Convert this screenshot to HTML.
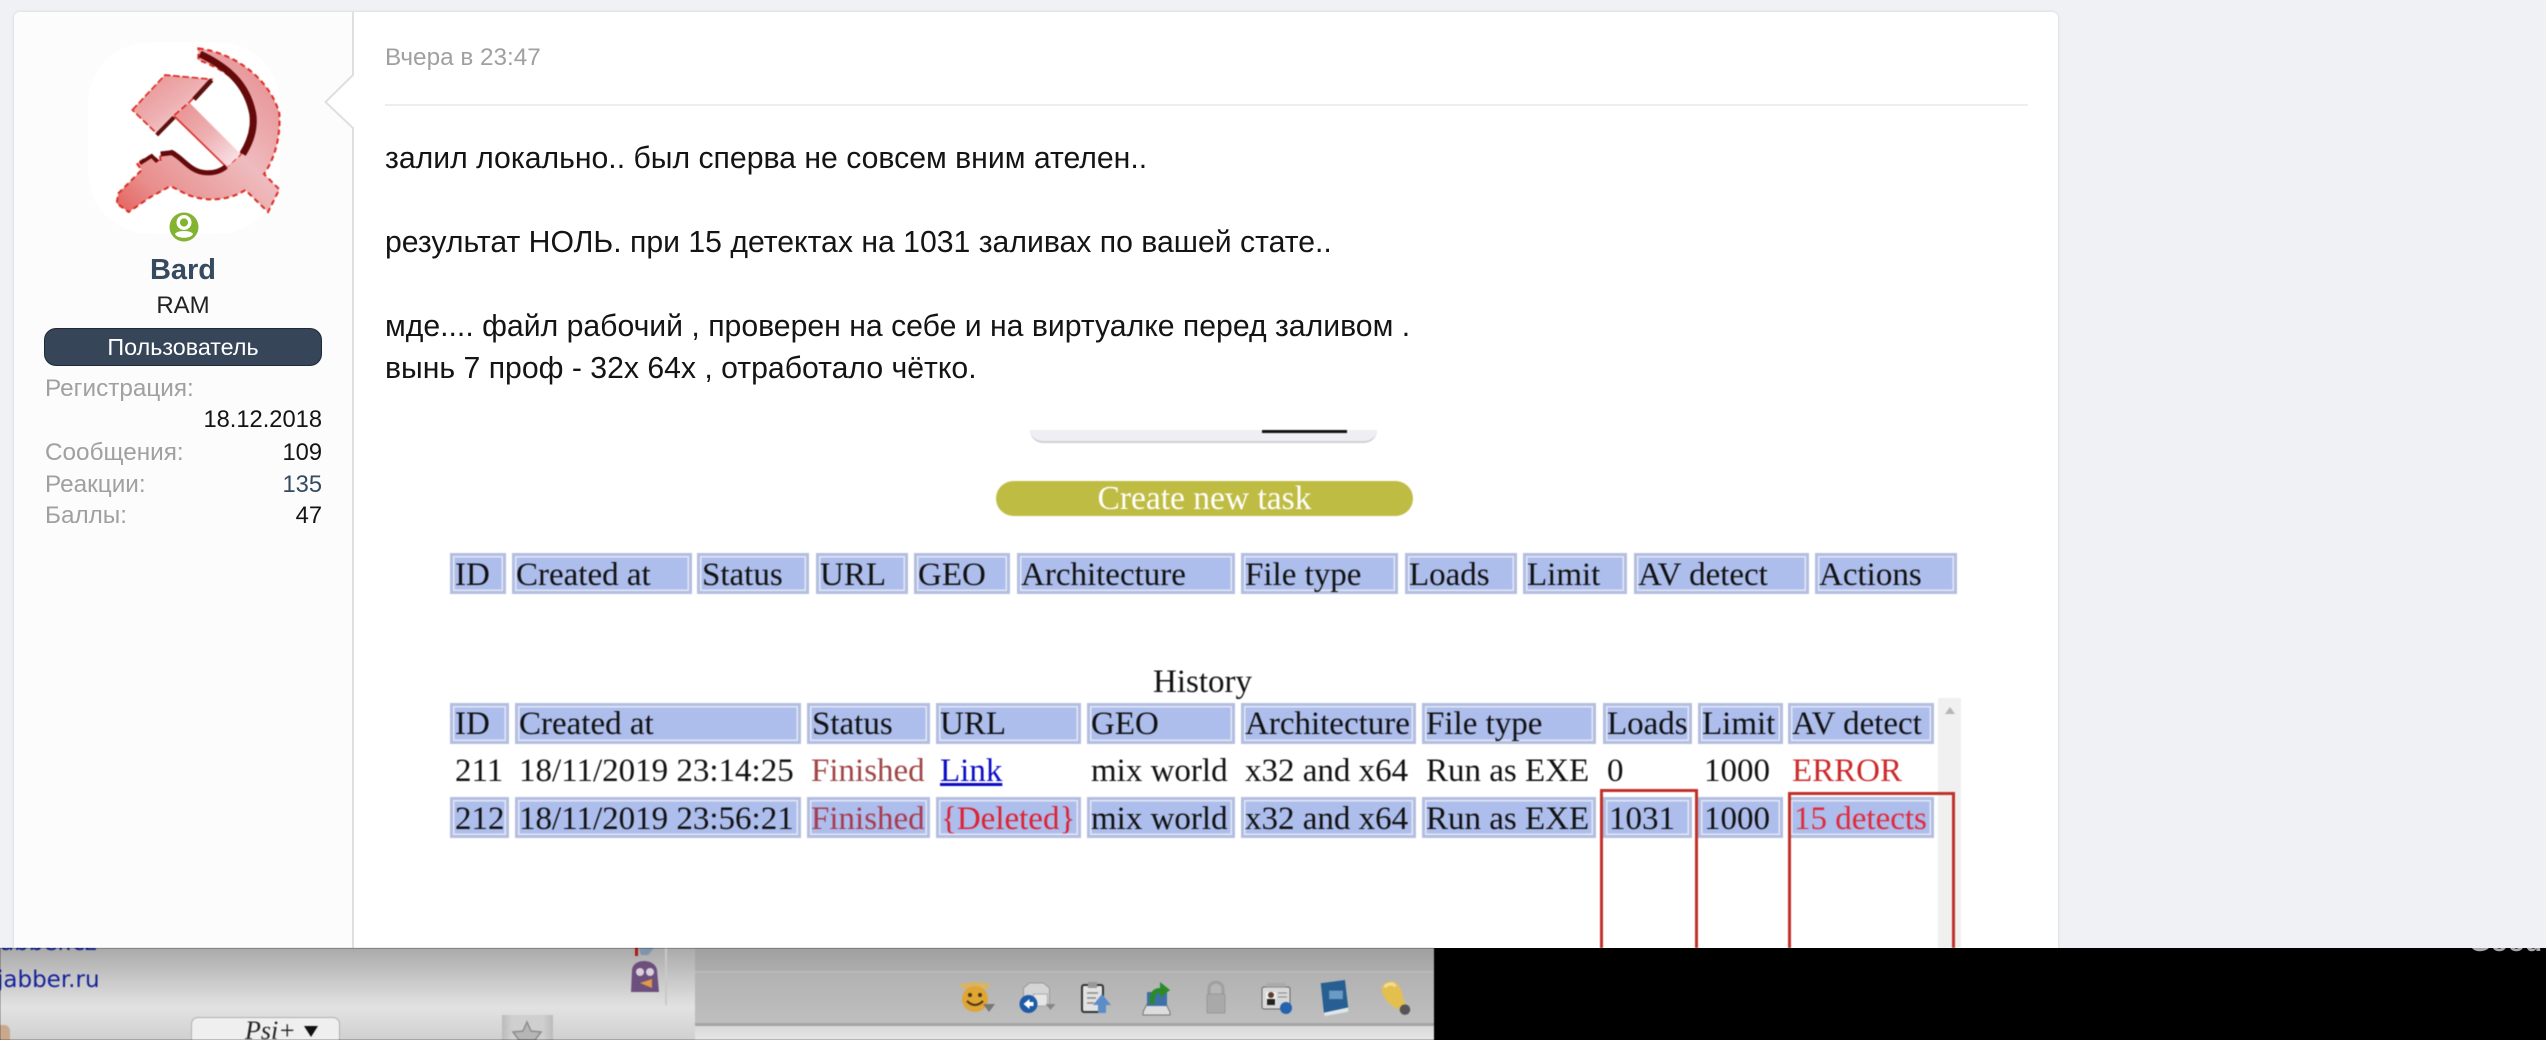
<!DOCTYPE html>
<html lang="ru"><head><meta charset="utf-8"><title>Post</title>
<style>
html,body{margin:0;padding:0}
body{width:2546px;height:1040px;overflow:hidden;position:relative;background:#f0f1f5;font-family:"Liberation Sans",sans-serif;color:#141414}
.a{position:absolute;white-space:nowrap}
#card{position:absolute;left:14px;top:12px;width:2044px;height:960px;background:#fff;border-radius:6px 6px 0 0;box-shadow:0 0 3px rgba(0,0,0,.13)}
#side{position:absolute;left:14px;top:12px;width:338px;height:960px;background:#fcfcfc;border-right:2px solid #dfdfdf;border-radius:6px 0 0 0}
.s{font-size:24.300px;line-height:32px}
.g{color:#a0a0a0}
.r{text-align:right;right:2224px;font-size:23.700px}
.b{font-size:30.200px;line-height:42px;color:#141414}
#shot{position:absolute;left:0;top:0;width:2546px;height:948px;overflow:hidden;filter:blur(.5px);font-family:"Liberation Serif",serif;font-size:33px;line-height:40px;color:#111}
.c{position:absolute;height:41px;box-sizing:border-box;border:3px solid #b3bee0;background:#adbdec;box-shadow:inset 0 0 0 1.5px #e4e9f8}
.t{position:absolute;white-space:nowrap}
</style></head><body>
<div id="card"></div>
<div id="side"></div>
<svg class="a" style="left:320px;top:70px" width="36" height="64" viewBox="0 0 36 64"><path d="M34 4 L5.500 32 L34 59" fill="#fff" stroke="#dfdfdf" stroke-width="2"/><rect x="34" y="0" width="2" height="64" fill="#fff"/></svg>
<div class="a" style="left:88px;top:42px;width:192px;height:192px;background:#fff;border-radius:62px"></div>

<svg class="a" style="left:70px;top:30px;filter:blur(.4px)" width="230" height="210" viewBox="0 0 690 630">
<defs>
<linearGradient id="sk" x1="0" y1="1" x2="1" y2="0"><stop offset="0" stop-color="#e4615c"/><stop offset=".18" stop-color="#e88e8c"/><stop offset=".55" stop-color="#efbbbe"/><stop offset="1" stop-color="#e58688"/></linearGradient>
<linearGradient id="hm" x1="0" y1="0" x2="1" y2="1"><stop offset="0" stop-color="#e98e8e"/><stop offset=".5" stop-color="#eeb0b2"/><stop offset="1" stop-color="#faeaf0"/></linearGradient>
</defs>
<path d="M385 55 C500 70 600 150 628 250 C632 320 615 385 582 432 L628 478 L594 546 L526 480 C480 510 420 515 370 500 C335 490 305 465 298 470 L240 502 L176 546 L140 520 L145 490 L215 420 L200 400 L245 375 L272 398 L270 375 L305 362 C335 375 360 420 400 432 C430 435 455 425 470 410 L510 375 C540 320 555 270 530 200 C500 140 440 110 385 90 Z" fill="url(#sk)" stroke="#dd2a22" stroke-width="6" stroke-dasharray="16 11"/>
<path d="M358 218 L512 372 L470 412 L312 258 Z" fill="url(#hm)"/>
<path d="M187 240 L285 135 L425 148 L360 215 L310 258 L265 315 Z" fill="url(#hm)" stroke="#dd2a22" stroke-width="5" stroke-dasharray="20 8"/>
<path d="M312 258 L470 412" stroke="#d8302c" stroke-width="5" fill="none"/>
<path d="M390 72 C470 110 530 160 548 250 C556 300 535 345 518 372" fill="none" stroke="#640a0a" stroke-width="21"/>
<path d="M272 372 L305 368 C340 385 360 425 405 428 C430 430 450 425 468 410" fill="none" stroke="#640a0a" stroke-width="15"/>
<path d="M425 150 L372 208" fill="none" stroke="#5e0f0f" stroke-width="14"/>
<path d="M260 315 L312 262" fill="none" stroke="#5e0f0f" stroke-width="12"/>
<path d="M210 400 L245 378 L262 395" fill="none" stroke="#640a0a" stroke-width="11"/>
</svg>

<svg class="a" style="left:169px;top:212px" width="30" height="30" viewBox="0 0 30 30"><circle cx="15" cy="15" r="14.500" fill="#84b332"/><circle cx="15" cy="10.500" r="5.800" fill="none" stroke="#fff" stroke-width="3.400"/><path d="M6 22 C8 18 22 18 24 22 C22 27 8 27 6 22 Z" fill="#fff"/></svg>

<div class="a" style="left:14px;width:338px;text-align:center;top:253px;font-size:29px;font-weight:700;line-height:34px;color:#364a60">Bard</div>
<div class="a" style="left:14px;width:338px;text-align:center;top:291px;font-size:24px;line-height:30px;color:#222">RAM</div>
<div class="a" style="left:44px;top:328px;width:278px;height:38px;box-sizing:border-box;background:#364558;border:1px solid #1f2a36;border-radius:12px;color:#fff;font-size:23.300px;line-height:36px;text-align:center">Пользователь</div>
<div class="a s g" style="left:45px;top:373px">Регистрация:</div>
<div class="a s r" style="top:404px">18.12.2018</div>
<div class="a s g" style="left:45px;top:437px">Сообщения:</div>
<div class="a s r" style="top:437px">109</div>
<div class="a s g" style="left:45px;top:469px">Реакции:</div>
<div class="a s r" style="top:469px;color:#364a60">135</div>
<div class="a s g" style="left:45px;top:500px">Баллы:</div>
<div class="a s r" style="top:500px">47</div>

<div class="a" style="left:385px;top:44px;font-size:24.300px;line-height:28px;color:#a0a0a0">Вчера в 23:47</div>
<div class="a" style="left:385px;top:104px;width:1643px;height:2px;background:#eeeeee"></div>
<div class="a b" style="left:385px;top:138px">залил локально.. был сперва не совсем вним ателен..</div>
<div class="a b" style="left:385px;top:222px">результат НОЛЬ. при 15 детектах на 1031 заливах по вашей стате..</div>
<div class="a b" style="left:385px;top:306px">мде.... файл рабочий , проверен на себе и на виртуалке перед заливом .</div>
<div class="a b" style="left:385px;top:348px">вынь 7 проф - 32x 64x , отработало чётко.</div>

<div id="shot">
<div class="a" style="left:1030px;top:430px;width:347px;height:13px;background:#eeeef3;border-radius:0 0 20px 20px;border-bottom:2px solid #cfcfd6;box-sizing:border-box"></div>
<div class="a" style="left:1262px;top:430px;width:85px;height:3px;background:#111"></div>
<div class="a" style="left:996px;top:481px;width:417px;height:35px;border-radius:18px;background:#bfbc44;color:#fff;text-align:center;font-size:33.500px;line-height:36px">Create new task</div>

<div class="c" style="left:450px;top:553px;width:56px"></div><div class="c" style="left:512px;top:553px;width:180px"></div><div class="c" style="left:697px;top:553px;width:112px"></div><div class="c" style="left:816px;top:553px;width:92px"></div><div class="c" style="left:914px;top:553px;width:96px"></div><div class="c" style="left:1017px;top:553px;width:218px"></div><div class="c" style="left:1241px;top:553px;width:157px"></div><div class="c" style="left:1405px;top:553px;width:112px"></div><div class="c" style="left:1523px;top:553px;width:104px"></div><div class="c" style="left:1634px;top:553px;width:175px"></div><div class="c" style="left:1815px;top:553px;width:142px"></div>
<div class="t" style="left:455px;top:555px">ID</div><div class="t" style="left:516px;top:555px">Created at</div><div class="t" style="left:702px;top:555px">Status</div><div class="t" style="left:820px;top:555px">URL</div><div class="t" style="left:918px;top:555px">GEO</div><div class="t" style="left:1021px;top:555px">Architecture</div><div class="t" style="left:1245px;top:555px">File type</div><div class="t" style="left:1409px;top:555px">Loads</div><div class="t" style="left:1527px;top:555px">Limit</div><div class="t" style="left:1638px;top:555px">AV detect</div><div class="t" style="left:1819px;top:555px">Actions</div>

<div class="t" style="left:1153px;top:662px">History</div>

<div class="c" style="left:450px;top:703px;width:59px"></div><div class="c" style="left:515px;top:703px;width:286px"></div><div class="c" style="left:807px;top:703px;width:123px"></div><div class="c" style="left:936px;top:703px;width:145px"></div><div class="c" style="left:1087px;top:703px;width:148px"></div><div class="c" style="left:1241px;top:703px;width:175px"></div><div class="c" style="left:1422px;top:703px;width:174px"></div><div class="c" style="left:1603px;top:703px;width:89px"></div><div class="c" style="left:1698px;top:703px;width:85px"></div><div class="c" style="left:1788px;top:703px;width:146px"></div>
<div class="t" style="left:455px;top:704px">ID</div><div class="t" style="left:519px;top:704px">Created at</div><div class="t" style="left:812px;top:704px">Status</div><div class="t" style="left:940px;top:704px">URL</div><div class="t" style="left:1091px;top:704px">GEO</div><div class="t" style="left:1245px;top:704px">Architecture</div><div class="t" style="left:1426px;top:704px">File type</div><div class="t" style="left:1607px;top:704px">Loads</div><div class="t" style="left:1702px;top:704px">Limit</div><div class="t" style="left:1792px;top:704px">AV detect</div>

<div class="t" style="left:455px;top:751px">211</div><div class="t" style="left:519px;top:751px">18/11/2019 23:14:25</div><div class="t" style="left:811px;top:751px;color:#a04545">Finished</div><div class="t" style="left:940px;top:751px;color:#0a0ac8;text-decoration:underline">Link</div><div class="t" style="left:1091px;top:751px">mix world</div><div class="t" style="left:1245px;top:751px">x32 and x64</div><div class="t" style="left:1426px;top:751px">Run as EXE</div><div class="t" style="left:1607px;top:751px">0</div><div class="t" style="left:1704px;top:751px">1000</div><div class="t" style="left:1792px;top:751px;color:#cc2a2a">ERROR</div>

<div class="c" style="left:450px;top:797px;width:59px"></div><div class="c" style="left:515px;top:797px;width:286px"></div><div class="c" style="left:807px;top:797px;width:123px"></div><div class="c" style="left:936px;top:797px;width:145px"></div><div class="c" style="left:1087px;top:797px;width:148px"></div><div class="c" style="left:1241px;top:797px;width:175px"></div><div class="c" style="left:1422px;top:797px;width:174px"></div><div class="c" style="left:1603px;top:797px;width:89px"></div><div class="c" style="left:1698px;top:797px;width:85px"></div><div class="c" style="left:1788px;top:797px;width:146px"></div>
<div class="t" style="left:455px;top:799px">212</div><div class="t" style="left:519px;top:799px">18/11/2019 23:56:21</div><div class="t" style="left:811px;top:799px;color:#a83a50">Finished</div><div class="t" style="left:941px;top:799px;color:#dd2233">{Deleted}</div><div class="t" style="left:1091px;top:799px">mix world</div><div class="t" style="left:1245px;top:799px">x32 and x64</div><div class="t" style="left:1426px;top:799px">Run as EXE</div><div class="t" style="left:1609px;top:799px">1031</div><div class="t" style="left:1704px;top:799px">1000</div><div class="t" style="left:1794px;top:799px;color:#e02a3a">15 detects</div>

<div class="a" style="left:1938px;top:698px;width:23px;height:250px;background:#f0f0f0"></div>
<div class="a" style="left:1945px;top:707px;width:0;height:0;border:5px solid transparent;border-top:0;border-bottom:7px solid #b5b5b5"></div>
<div class="a" style="left:1600px;top:789px;width:98px;height:170px;box-sizing:border-box;border:3px solid #c0302a"></div>
<div class="a" style="left:1788px;top:792px;width:167px;height:170px;box-sizing:border-box;border:3px solid #c0302a"></div>
</div>

<!-- bottom desktop strip -->
<div class="a" style="left:0;top:948px;width:2546px;height:92px;background:#000"></div>
<div class="a" style="left:2469px;top:948px;width:77px;height:5px;overflow:hidden"><div class="a" style="left:0;top:-23px;font-size:28px;line-height:34px;font-weight:700;color:#a8a8a8">Good !</div></div>

<div class="a" style="left:0;top:948px;width:1434px;height:92px;overflow:hidden;filter:blur(.4px)">
 <div class="a" style="left:695px;top:0;width:739px;height:75px;background:linear-gradient(#a0a0a0,#adadad 23px,#c0c0c0 23px,#b2b2b2 25px,#bfbfbf 75px)"></div>
 <div class="a" style="left:695px;top:75px;width:739px;height:3px;background:#a4a4a4"></div>
 <div class="a" style="left:695px;top:78px;width:739px;height:14px;background:linear-gradient(#dadada,#e6e6e6)"></div>
 <div class="a" style="left:0;top:0;width:695px;height:59px;background:linear-gradient(#aaaaaa,#e2e2e2)"></div>
 <div class="a" style="left:0;top:59px;width:695px;height:33px;background:linear-gradient(#e2e2e2,#d0d0d0)"></div>
 <div class="a" style="left:665px;top:0;width:2px;height:57px;background:#c8c8c8"></div>
 <div class="a" style="left:0;top:-19px;font-family:'DejaVu Sans',sans-serif;font-size:23px;line-height:28px;color:#14229a">abber.cz</div>
 <div class="a" style="left:-3px;top:16px;font-family:'DejaVu Sans',sans-serif;font-size:23px;line-height:32px;color:#14229a">jabber.ru</div>
 <svg class="a" style="left:628px;top:0" width="34" height="48" viewBox="0 0 34 48"><path d="M7 0 H10 V8 H7Z" fill="#b01818"/><path d="M11 0 H26 L20 7 H13Z" fill="#7e94aa"/><path d="M3 44 L4 22 C5 10 27 10 29 22 L31 44Z" fill="#6d4f7d"/><circle cx="12" cy="24" r="4" fill="#d9d0dc"/><circle cx="22" cy="24" r="4" fill="#d9d0dc"/><path d="M12 35 L24 31 V40Z" fill="#dc9a4a"/></svg>
 <div class="a" style="left:191px;top:69px;width:149px;height:30px;background:#efefef;border:1px solid #b0b0b0;border-radius:7px;box-sizing:border-box"></div>
 <div class="a" style="left:245px;top:68px;font-family:'Liberation Serif',serif;font-style:italic;font-size:26px;line-height:30px;color:#222">Psi+</div>
 <div class="a" style="left:304px;top:78px;width:0;height:0;border:7px solid transparent;border-top:11px solid #111;border-bottom:0"></div>
 <div class="a" style="left:502px;top:67px;width:51px;height:25px;background:linear-gradient(90deg,#bbb,#cfcfcf 20%,#cfcfcf 80%,#bbb)"></div>
 <svg class="a" style="left:511px;top:72px" width="32" height="20" viewBox="0 0 32 20"><path d="M16 2 L20 11 L30 12 L24 20 H8 L2 12 L12 11Z" fill="#b6b6b6" stroke="#8d8d8d" stroke-width="1.500"/></svg>
 <div class="a" style="left:0;top:77px;width:10px;height:15px;background:#c9a98e;border-radius:0 6px 0 0"></div>

 <!-- toolbar icons -->
 <svg class="a" style="left:958px;top:32px" width="40" height="36" viewBox="0 0 38 36"><ellipse cx="16" cy="6" rx="15" ry="4" fill="#d8b566"/><circle cx="16" cy="19" r="13" fill="#dfa535"/><circle cx="11" cy="15" r="2" fill="#4c3610"/><circle cx="21" cy="15" r="2" fill="#4c3610"/><path d="M8 21 Q16 29 24 21" stroke="#4c3610" stroke-width="2" fill="none"/><path d="M24 24 H36 L30 32Z" fill="#777"/></svg>
 <svg class="a" style="left:1019px;top:32px" width="39" height="36" viewBox="0 0 38 36"><path d="M4 8 L10 3 H24 L30 8 V26 H4Z" fill="#d4d4d4" stroke="#999"/><path d="M14 14 L28 14 V26 H14Z" fill="#e5e5e5" stroke="#aaa"/><circle cx="9" cy="24" r="9" fill="#1e5aa8"/><path d="M4 24 L10 19 V22 H14 V26 H10 V29Z" fill="#fff"/><path d="M26 24 H36 L31 30Z" fill="#888"/></svg>
 <svg class="a" style="left:1080px;top:32px" width="34" height="36" viewBox="0 0 34 36"><rect x="2" y="5" width="21" height="27" rx="2" fill="#e2e2e2" stroke="#333" stroke-width="2"/><rect x="8" y="2" width="9" height="6" fill="#999"/><path d="M7 13 H18 M7 18 H16 M7 23 H14" stroke="#888" stroke-width="1.500"/><path d="M22 14 L31 25 H26 V33 H18 V25 H13Z" fill="#5d8dc7"/></svg>
 <svg class="a" style="left:1142px;top:32px" width="30" height="36" viewBox="0 0 30 36"><path d="M1 32 L5 24 H24 L28 32 V35 H1Z" fill="#ddd" stroke="#777"/><rect x="5" y="12" width="20" height="14" fill="#3f6fa8"/><path d="M8 24 C6 10 14 8 18 8 V2 L28 10 L18 18 V13 C14 13 12 16 13 24Z" fill="#2a8a2a"/></svg>
 <svg class="a" style="left:1205px;top:32px" width="22" height="36" viewBox="0 0 22 36"><path d="M4 15 V9 C4 0 18 0 18 9 V15" fill="none" stroke="#a0a0a0" stroke-width="3"/><rect x="2" y="14" width="18" height="19" rx="1" fill="#a9a9a9" stroke="#979797"/></svg>
 <svg class="a" style="left:1261px;top:34px" width="32" height="34" viewBox="0 0 32 34"><rect x="1" y="5" width="28" height="22" rx="2" fill="#d8d8d8" stroke="#666"/><rect x="5" y="1" width="20" height="4" fill="#aaa"/><rect x="5" y="10" width="10" height="13" fill="#f0f0f0"/><circle cx="10" cy="13" r="3" fill="#5c3e2a"/><rect x="6" y="17" width="8" height="6" fill="#222"/><path d="M17 11 H26 M17 15 H26" stroke="#888"/><circle cx="25" cy="26" r="6" fill="#2763ad"/></svg>
 <svg class="a" style="left:1319px;top:31px" width="33" height="38" viewBox="0 0 30 36"><path d="M1 4 L24 1 L27 27 L4 32Z" fill="#285f92"/><path d="M4 32 L27 27 V31 L5 35Z" fill="#dfe6ea"/><rect x="9" y="11" width="13" height="8" fill="#6b9ac4"/></svg>
 <svg class="a" style="left:1379px;top:31px" width="35" height="38" viewBox="0 0 32 36"><path d="M2 10 C2 2 14 -1 18 6 C22 12 22 20 25 25 L18 29 C12 26 3 20 2 10Z" fill="#e3bf50"/><path d="M5 8 C6 5 12 3 15 7" stroke="#f2dc95" stroke-width="3" fill="none"/><circle cx="24" cy="29" r="5" fill="#555"/></svg>
</div>
</body></html>
